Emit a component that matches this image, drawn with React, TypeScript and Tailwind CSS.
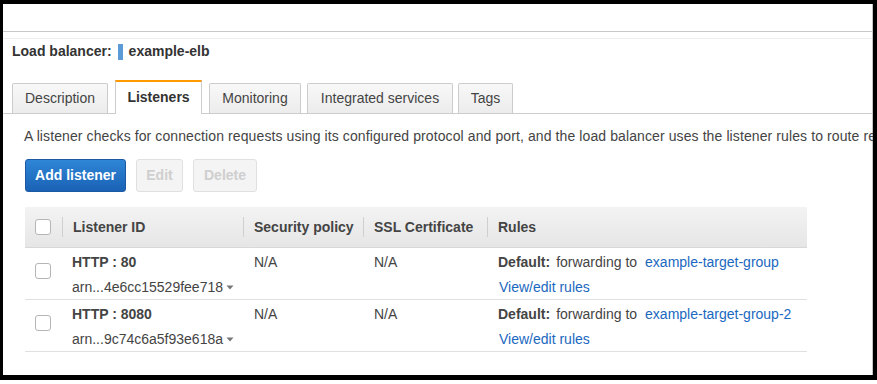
import React from "react";

const Caret = () => (
  <svg width="8" height="5" viewBox="0 0 8 5" className="ml-[3px] inline-block">
    <path d="M0.5 0.5 L7.5 0.5 L4 4.5 Z" fill="#777" />
  </svg>
);

const Checkbox = () => (
  <div className="w-[16px] h-[16px] rounded-[3px] border border-[#b5b5b5] bg-white" />
);

const Tab = ({ label, width, ml, active }: { label: string; width: number; ml: number; active?: boolean }) =>
  active ? (
    <div
      className="h-[34px] mb-[-1px] border-t-2 border-t-[#f90] border-x border-x-[#ccc] bg-white flex items-center justify-center font-bold text-[#333] pb-[2px]"
      style={{ width, marginLeft: ml }}
    >
      {label}
    </div>
  ) : (
    <div
      className="h-[30px] border-t border-x border-[#ccc] rounded-t-[2px] bg-gradient-to-b from-[#f8f8f8] to-[#ececec] flex items-center justify-center text-[#444]"
      style={{ width, marginLeft: ml }}
    >
      {label}
    </div>
  );

const HeaderCell = ({ label }: { label: string }) => (
  <div className="flex items-center h-full">
    <div className="w-px h-[20px] bg-[#cfcfcf]" />
    <span className="ml-[10px] font-bold text-[#444] whitespace-nowrap">{label}</span>
  </div>
);

const Row = ({ port, arn, target }: { port: string; arn: string; target: string }) => (
  <div className="grid grid-cols-[37px_181px_120px_124px_320px] h-[52px] border-b border-[#e0e0e0] text-[#444]">
    <div className="pl-[10px] pt-[15px]">
      <Checkbox />
    </div>
    <div className="pl-[10px] pt-[6px] flex flex-col gap-[9px] leading-[16px] whitespace-nowrap">
      <span className="font-bold">{port}</span>
      <span className="flex items-center">
        {arn}
        <Caret />
      </span>
    </div>
    <div className="pl-[11px] pt-[6px] leading-[16px]">N/A</div>
    <div className="pl-[11px] pt-[6px] leading-[16px]">N/A</div>
    <div className="pl-[11px] pt-[6px] flex flex-col gap-[9px] leading-[16px] whitespace-nowrap">
      <span>
        <span className="font-bold">Default:</span>
        <span className="ml-[6px]">forwarding to</span>
        <span className="ml-[8px] text-[#1a68c0]">{target}</span>
      </span>
      <span className="ml-[1px] text-[#1a68c0]">View/edit rules</span>
    </div>
  </div>
);

export default function App() {
  return (
    <div className="w-[877px] h-[384px] bg-white font-['Liberation_Sans',Arial,sans-serif] text-[14px]">
      <div className="h-[380px] border-t-4 border-l-[3px] border-r-4 border-b-[5px] border-black overflow-hidden">
        <div className="h-full border-r border-[#c4c4c4] flex flex-col">
          <div className="h-[28px] shrink-0 border-b border-[#c8c8c8]" />
          <div className="h-[7px] shrink-0 border-b border-[#eeeeee]" />

          <div className="mt-[4px] h-[16px] pl-[9px] flex items-center leading-[16px] font-bold text-[#333] whitespace-nowrap">
            <span>Load balancer:</span>
            <span className="ml-[6px] w-[5px] h-[16px] mt-[2px] bg-[#5b9bd8]" />
            <span className="ml-[6px]">example-elb</span>
          </div>

          <div className="mt-[21px] flex items-end border-b border-[#ccc] pl-[9px]">
            <Tab label="Description" width={96} ml={0} />
            <Tab label="Listeners" width={87} ml={7} active />
            <Tab label="Monitoring" width={92} ml={7} />
            <Tab label="Integrated services" width={146} ml={6} />
            <Tab label="Tags" width={55} ml={5} />
          </div>

          <div className="mt-[14px] pl-[21px] leading-[16px] text-[#444] whitespace-nowrap tracking-[0.1px]">
            A listener checks for connection requests using its configured protocol and port, and the load balancer uses the listener rules to route requests to targets.
          </div>

          <div className="mt-[15px] pl-[22px] flex gap-[10px]">
            <button className="h-[33px] w-[101px] rounded-[3px] border border-[#1b5aa3] bg-gradient-to-b from-[#2f86d6] to-[#1a62b6] text-white font-bold">
              Add listener
            </button>
            <button className="h-[33px] w-[47px] rounded-[3px] border border-[#e0e0e0] bg-[#f4f4f4] text-[#cfcfcf] font-bold">
              Edit
            </button>
            <button className="h-[33px] w-[64px] rounded-[3px] border border-[#e0e0e0] bg-[#f4f4f4] text-[#cfcfcf] font-bold">
              Delete
            </button>
          </div>

          <div className="mt-[15px] ml-[22px] w-[782px]">
            <div className="grid grid-cols-[37px_181px_120px_124px_320px] h-[41px] border-b border-[#d8d8d8] bg-gradient-to-b from-[#f3f3f3] to-[#e6e6e6]">
              <div className="pl-[10px] flex items-center">
                <Checkbox />
              </div>
              <HeaderCell label="Listener ID" />
              <HeaderCell label="Security policy" />
              <HeaderCell label="SSL Certificate" />
              <HeaderCell label="Rules" />
            </div>
            <Row port="HTTP : 80" arn="arn...4e6cc15529fee718" target="example-target-group" />
            <Row port="HTTP : 8080" arn="arn...9c74c6a5f93e618a" target="example-target-group-2" />
          </div>
        </div>
      </div>
    </div>
  );
}
